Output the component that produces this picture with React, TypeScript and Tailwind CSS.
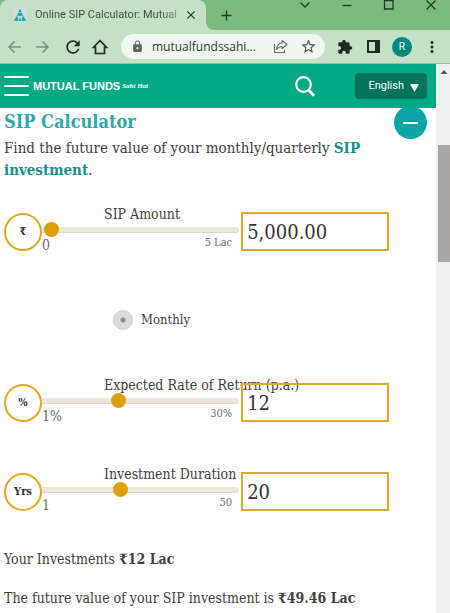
import React, { useState } from 'react';
import { MdRefresh, MdLock, MdStarBorder, MdExtension, MdMoreVert, MdClose, MdAdd } from 'react-icons/md';

const sliders = [
  {
    id: "amount",
    label: "SIP Amount",
    unit: "₹",
    min: 0,
    max: 500000,
    value: 5000,
    display: "5,000.00",
    minLabel: "0",
    maxLabel: "5 Lac",
  },
  {
    id: "rate",
    label: "Expected Rate of Return (p.a.)",
    unit: "%",
    min: 1,
    max: 30,
    value: 12,
    display: "12",
    minLabel: "1%",
    maxLabel: "30%",
  },
  {
    id: "duration",
    label: "Investment Duration",
    unit: "Yrs",
    min: 1,
    max: 50,
    value: 20,
    display: "20",
    minLabel: "1",
    maxLabel: "50",
  },
];

type Slider = (typeof sliders)[number];

const Favicon = () => (
  <svg width="14" height="14" viewBox="0 0 14 14" className="shrink-0">
    <rect width="14" height="14" fill="#d3dcdc" />
    <path d="M7 .8l1.900 3.400H5.100zM5.200 5h3.600l1.500 2.800H3.700zM3.300 8.500h1.500L5.500 13H.8zM9.200 8.500h1.500L13.200 13H8.500zM7 8.700L8.200 13H5.800z" fill="#14a8b0" />
  </svg>
);

const TabStrip = () => (
  <div className="flex h-[30px] bg-[#c5e1c5]">
    <div className="w-[206px] shrink-0 bg-[#7bbb7c]">
      <div className="flex h-full items-center rounded-t-lg bg-[#c5e1c5] pl-[13px] pr-2">
        <Favicon />
        <span className="ml-2 w-[146px] overflow-hidden whitespace-nowrap bg-linear-to-r from-[#3c4a40] from-85% to-[#8fa592] bg-clip-text text-[11px] text-transparent font-['Roboto',sans-serif]">
          Online SIP Calculator: Mutual
        </span>
        <button aria-label="Close tab" className="ml-[3px] text-[#263029]"><MdClose size={14} /></button>
      </div>
    </div>
    <div className="flex flex-1 justify-between rounded-bl-lg bg-[#7bbb7c] text-[#26382a]">
      <button aria-label="New tab" className="ml-3"><MdAdd size={17} /></button>
      <div className="flex w-[151px] items-start justify-between pr-[13px]">
        <button aria-label="Search tabs">
          <svg width="12" height="12" viewBox="0 0 12 12" fill="none" stroke="currentColor" strokeWidth="1.3"><path d="M1.500 2.500L6 7l4.500-4.500" /></svg>
        </button>
        <button aria-label="Minimize">
          <svg width="12" height="12" viewBox="0 0 12 12" fill="none" stroke="currentColor" strokeWidth="1.3"><path d="M1.500 5.500h9" /></svg>
        </button>
        <button aria-label="Maximize">
          <svg width="12" height="12" viewBox="0 0 12 12" fill="none" stroke="currentColor" strokeWidth="1.3"><path d="M1.500 .5h8.500v8.500H1.500z" /></svg>
        </button>
        <button aria-label="Close">
          <svg width="12" height="12" viewBox="0 0 12 12" fill="none" stroke="currentColor" strokeWidth="1.3"><path d="M1.500 .5l9 9M10.500 .5l-9 9" /></svg>
        </button>
      </div>
    </div>
  </div>
);

const Toolbar = () => (
  <div className="flex h-[34px] items-center border-b border-[#a3b8a3] bg-[#c5e1c5] pl-[7px] pr-[9px] text-[#202a24]">
    <div className="flex shrink-0 items-center gap-[13px]">
      <button aria-label="Back">
        <svg width="15" height="14" viewBox="0 0 15 14" fill="none" stroke="#7f8f82" strokeWidth="1.6"><path d="M14 7H2M7.500 1.500L2 7l5.500 5.500" /></svg>
      </button>
      <button aria-label="Forward">
        <svg width="15" height="14" viewBox="0 0 15 14" fill="none" stroke="#7f8f82" strokeWidth="1.6"><path d="M1 7h12M7.500 1.500L13 7l-5.500 5.500" /></svg>
      </button>
      <button aria-label="Reload"><MdRefresh size={20} /></button>
      <button aria-label="Home" className="-ml-1">
        <svg width="16" height="16" viewBox="0 0 16 16" fill="none" stroke="currentColor" strokeWidth="1.7"><path d="M8 1.500L1.500 8.300H3.500v6.200h9V8.300h2z" /></svg>
      </button>
    </div>
    <div className="ml-[13px] flex h-[25px] min-w-0 flex-1 items-center rounded-full bg-[#f0f7f0] pl-[10px] pr-2">
      <MdLock size={13} className="shrink-0 text-[#5a635c]" />
      <input
        aria-label="Address"
        readOnly
        value="mutualfundssahi..."
        className="ml-2 w-0 min-w-0 flex-1 bg-transparent text-xs text-[#2c3a32] outline-none"
      />
      <button aria-label="Share" className="mr-3">
        <svg width="15" height="15" viewBox="0 0 15 15" fill="none" stroke="#626c65" strokeWidth="1.1" strokeLinejoin="round">
          <path d="M1.500 5v8.500h10V11" />
          <path d="M9 1.500l5 4-5 4V7.500C6.500 7.300 5 8.500 3.500 10.500 4 6.500 6 4.200 9 4z" />
        </svg>
      </button>
      <button aria-label="Bookmark" className="text-[#4a544d]"><MdStarBorder size={17} /></button>
    </div>
    <div className="ml-3 flex shrink-0 items-center">
      <button aria-label="Extensions"><MdExtension size={16} /></button>
      <button aria-label="Side panel" className="ml-[14px]">
        <svg width="13" height="13" viewBox="0 0 13 13"><path d="M1 1h11v11H1z" fill="none" stroke="currentColor" strokeWidth="2" /><path d="M8 1h4v11H8z" fill="currentColor" /></svg>
      </button>
      <button aria-label="Profile" className="ml-3 size-5 rounded-full bg-[#00897b] text-[11px] text-white">R</button>
      <button aria-label="Menu" className="ml-[11px]"><MdMoreVert size={18} /></button>
    </div>
  </div>
);

const SiteHeader = () => (
  <header className="relative z-10 flex h-11 items-center bg-[#03a985] pl-1 pr-[9px] text-white">
    <button aria-label="Open menu" className="flex w-[25px] flex-col gap-[7px]">
      <span className="h-[2px] w-full rounded bg-white" />
      <span className="h-[2px] w-full rounded bg-white" />
      <span className="h-[2px] w-full rounded bg-white" />
    </button>
    <a href="#home" className="ml-1 flex items-center whitespace-nowrap">
      <span className="text-[11px] font-bold font-['Liberation_Sans',sans-serif]">MUTUAL FUNDS</span>
      <span className="ml-[2px] text-[7px] font-bold italic font-['Liberation_Serif',serif]">Sahi Hai</span>
    </a>
    <button aria-label="Search" className="ml-auto mr-10">
      <svg width="20" height="21" viewBox="0 0 20 21" fill="none" stroke="currentColor" strokeWidth="2.200">
        <circle cx="8.500" cy="8.500" r="7.300" />
        <path d="M13.500 14l5.500 5.800" strokeWidth="2.800" />
      </svg>
    </button>
    <button className="flex h-[26px] w-[72px] items-center justify-end gap-[6px] rounded bg-[#03745b] pr-2 text-[11px] font-['Roboto',sans-serif]">
      English
      <svg width="9" height="8" viewBox="0 0 9 8" className="mt-[3px]"><path d="M0 0h9L4.500 8z" fill="currentColor" /></svg>
    </button>
  </header>
);

const SliderRow = ({ slider }: { slider: Slider }) => {
  const [value, setValue] = useState(slider.value);
  const [text, setText] = useState(slider.display);

  return (
    <div className="flex items-start">
      <div className="mt-[6px] flex size-[38px] shrink-0 items-center justify-center rounded-full border-2 border-[#dea821] text-[11px] font-bold text-[#333]">
        {slider.unit}
      </div>
      <div className="min-w-0 flex-[4]">
        <label htmlFor={slider.id} className="block whitespace-nowrap pl-[62px] text-sm leading-[15px]">
          {slider.label}
        </label>
        <input
          id={slider.id}
          type="range"
          min={slider.min}
          max={slider.max}
          value={value}
          onChange={(e) => {
            setValue(Number(e.target.value));
            setText(e.target.value);
          }}
          className="block h-[15px] w-full appearance-none bg-transparent [&::-webkit-slider-runnable-track]:h-[6px] [&::-webkit-slider-runnable-track]:rounded-r [&::-webkit-slider-runnable-track]:border-b [&::-webkit-slider-runnable-track]:border-[#d9d9d6] [&::-webkit-slider-runnable-track]:bg-[#ede6d4] [&::-webkit-slider-thumb]:-mt-[5px] [&::-webkit-slider-thumb]:size-[15px] [&::-webkit-slider-thumb]:appearance-none [&::-webkit-slider-thumb]:rounded-full [&::-webkit-slider-thumb]:bg-[#dc9f0b]"
        />
        <div className="flex justify-between pr-[7px] leading-4 text-[#6b6b6b]">
          <span className="text-sm leading-4">{slider.minLabel}</span>
          <span className="text-[11px] leading-3">{slider.maxLabel}</span>
        </div>
      </div>
      <div className="mt-[5px] min-w-0 flex-[3] pl-[2px]">
        <input
          aria-label={`${slider.label} value`}
          value={text}
          onChange={(e) => setText(e.target.value)}
          className="block h-[39px] w-full border-2 border-[#dea82b] bg-transparent px-1 text-xl text-[#333] outline-none"
        />
      </div>
    </div>
  );
};

const Calculator = () => (
  <main className="flex-1 pl-1 text-sm text-[#404040] font-['DejaVu_Serif_Condensed','DejaVu_Serif',serif]">
    <div className="flex items-start justify-between pr-[9px]">
      <h1 className="text-lg font-bold leading-7 text-[#2fa8a8]">SIP Calculator</h1>
      <button aria-label="Collapse" className="-my-[2px] flex size-[33px] items-center justify-center rounded-full bg-[#0ba5a6]">
        <span className="h-[2px] w-[15px] bg-white" />
      </button>
    </div>
    <p className="pr-12 text-[15px] leading-[22px]">
      Find the future value of your monthly/quarterly{' '}
      <a href="#sip" className="font-bold text-[#17908e]">SIP investment</a>.
    </p>
    <div className="pr-[47px] pt-[26px]">
      <SliderRow slider={sliders[0]} />
      <label className="ml-[109px] mt-[57px] flex items-center gap-2 text-[13px] leading-5">
        <input
          type="radio"
          name="frequency"
          defaultChecked
          className="size-5 appearance-none rounded-full border border-[#d0d0cc] bg-[#dcdcd8] bg-radial from-[#8c8c88] from-[2px] to-[#dcdcd8] to-[3px]"
        />
        Monthly
      </label>
      <div className="mt-12 flex flex-col gap-[43px]">
        <SliderRow slider={sliders[1]} />
        <SliderRow slider={sliders[2]} />
      </div>
    </div>
    <div className="flex flex-col gap-[19px] pb-1 pt-9 leading-5">
      <p>Your Investments <b>₹12 Lac</b></p>
      <p>The future value of your SIP investment is <b>₹49.46 Lac</b></p>
    </div>
  </main>
);

const Scrollbar = () => (
  <div aria-hidden="true" className="flex w-[14px] shrink-0 flex-col items-end bg-[#f0f0f0]">
    <svg width="14" height="17" viewBox="0 0 14 17"><path d="M4.500 10L8 6l3.500 4z" fill="#505050" /></svg>
    <div className="mt-16 h-[117px] w-3 bg-[#a8a7a6]" />
  </div>
);

const App = () => (
  <div className="flex min-h-screen flex-col bg-white font-['Open_Sans',sans-serif]">
    <TabStrip />
    <Toolbar />
    <div className="flex flex-1">
      <div className="flex min-w-0 flex-1 flex-col">
        <SiteHeader />
        <Calculator />
      </div>
      <Scrollbar />
    </div>
  </div>
);

export default App;
